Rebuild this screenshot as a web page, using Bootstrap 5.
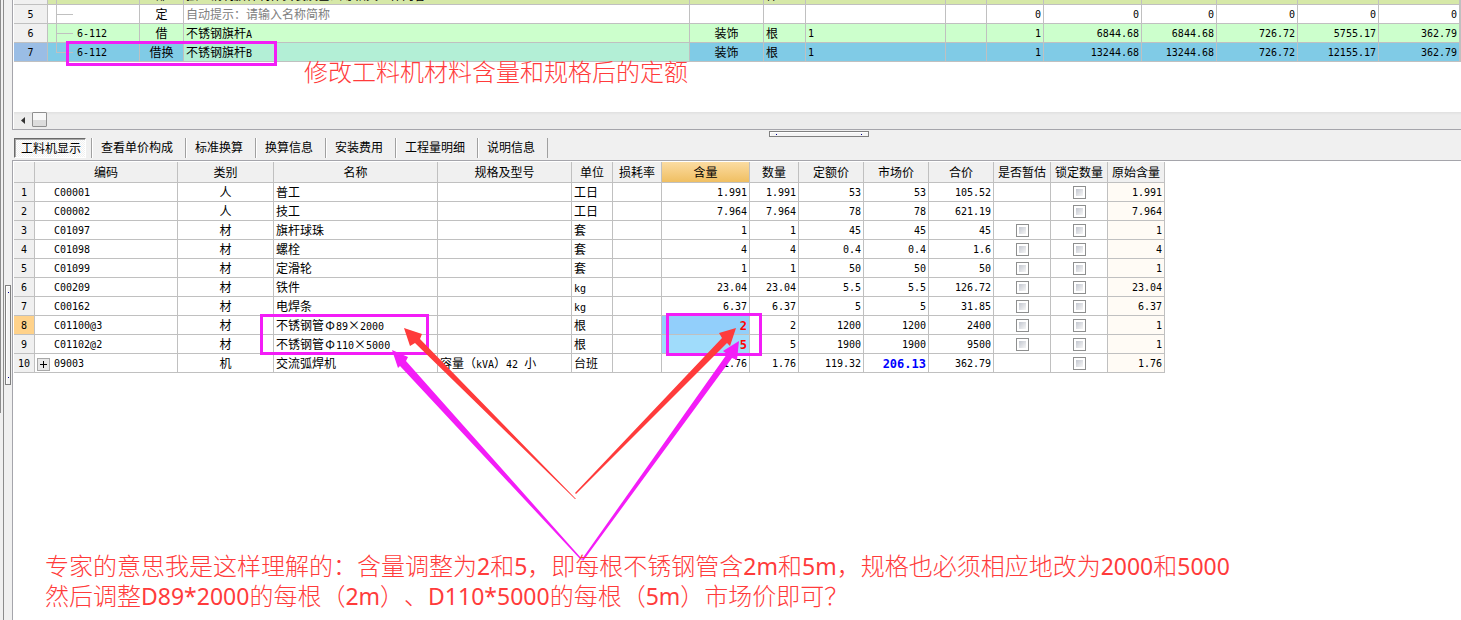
<!DOCTYPE html>
<html lang="zh-CN">
<head>
<meta charset="utf-8">
<meta name="viewport" content="width=device-width, initial-scale=1">
<title>工料机显示</title>
<link href="https://cdn.jsdelivr.net/npm/bootstrap@5.3.0/dist/css/bootstrap.min.css" rel="stylesheet">
<style>
body{background:#f0f0f0;color:#000;font:12px/18px "Liberation Sans","Noto Sans CJK SC",sans-serif}
.n{font-family:"DejaVu Sans Mono","Noto Sans CJK SC",monospace;font-size:10px}
span.n{line-height:1}
.rail{width:12px;flex:none}
.rail-edge{width:1px;height:413px;background:#8c8c8c}
.rail-bar{border-left:1px solid #8c8c8c;margin-left:2px}
.grip{background:#f4f4f4;border:1px solid #808080;box-shadow:inset 1px 1px #fff;padding:0;display:flex;justify-content:space-between;align-items:center}
.grip::before,.grip::after{content:"";width:1px;height:1px;background:#00008b}
.grip-v{width:6px;height:100px;margin:285px 0 0 1px;flex-direction:column;padding:6px 0}
.grip-h{width:100px;height:6px;padding:0 6px}
.work{min-width:0}
.pane{border-left:1px solid #a5a5ab;padding-left:1px;background:#fff}
.pane-top{height:130px;border-bottom:1px solid #a5a5ab;overflow:hidden}
.pane-bottom{border-top:1px solid #a5a5ab;padding-top:1px}
.lift{margin-top:-14px}
.grid{table-layout:fixed;border-collapse:separate;border-spacing:0;font-family:"Noto Sans CJK SC",sans-serif}
.grid-res{width:1151px}
.grid td,.grid th{height:19px;padding:0 2px;border-right:1px solid #c0c0c0;border-bottom:1px solid #c0c0c0;line-height:18px;white-space:nowrap;overflow:hidden;font-weight:400;vertical-align:top}
.grid td.n,.grid th.n{padding-top:2px;line-height:16px}
.grid thead th{height:21px;background:#f0f0f0;text-align:center;line-height:20px;padding:0}
.grid tbody th{background:#f0f0f0;text-align:center}
.grid thead .hot{background:linear-gradient(#fbdca2,#f0bf62)}
.r{text-align:right}.c{text-align:center}
.group td{background:#d6e8a8}
.green td{background:#ccffcc}
.sel td{background:#80cbe6}
.sel td.nm{background:#b3efd6}
.grid .sel th{background:#9abde5}
.grid th.cur{background:#ffd28a}
.blue1{background:#92cffb}.blue2{background:#a0dcfb}
.orig{background:#fffbf5}
.grid td.tree{position:relative;padding-left:29px}
.grid td.code{padding-left:19px}
.tree::before{content:"";position:absolute;left:8px;top:0;height:19px;border-left:1px solid #c0c0c0}
.tree::after{content:"";position:absolute;left:8px;top:9px;width:17px;border-top:1px solid #c0c0c0}
.group .tree::after{display:none}
.sel .tree::before{height:10px}
.hint{color:#808080}
.fw{display:inline-block;width:12px;text-align:center;line-height:1}
.grid td.b{font-weight:700;font-size:12px}
.text-red{color:#f00}.text-navy{color:#00f}
.hscroll{height:17px;background:linear-gradient(#e0e0e0,#ececec 3px,#ececec)}
.hscroll button{padding:0;border:0;background:none;width:18px;height:16px;display:flex;align-items:center;justify-content:center}
.hscroll .thumb{width:15px;height:15px;border:1px solid #8f8f8f;border-radius:1px;background:linear-gradient(#f8f8f8 50%,#dcdcdc 50%)}
.tabs{height:30px;padding-left:2px;position:relative}
.tabs .grip-h{position:absolute;top:1px;left:calc(50% + 32px)}
.tabrow{padding-top:8px}
.tabrow button{border:0;border-left:1px solid #a0a0a0;box-shadow:inset 1px 0 #fff;background:none;padding:0 12px 0 9px;height:20px;line-height:20px;color:#000}
.tabrow button:last-child{border-right:1px solid #a0a0a0}
.tabrow button.on{border:1px solid;border-color:#6a6a6a #fff #fff #6a6a6a;padding:0 4px 0 6px;margin-right:5px;background:repeating-conic-gradient(#fff 0 25%,#f0f0f0 0 50%) 0 0/2px 2px;box-shadow:inset 1px 1px #a8a8a8}
.tick{appearance:none;display:block;width:13px;height:13px;margin:3px auto 0;border:1px solid #8e8f8f;background:linear-gradient(135deg,#c3c7d0,#f6f6f6) content-box #f4f4f4;padding:2px}
.opener{gap:4px}
.plus{width:13px;height:13px;padding:0;border:1px solid #a8a8a8;background:#e8e8e8;flex:none;display:flex;align-items:center;justify-content:center}
.marks{position:absolute;left:0;top:0;pointer-events:none}
.note{position:absolute;margin:0;color:#ff3b3b;font:300 24px/30px "Noto Sans CJK SC",sans-serif;white-space:nowrap;font-kerning:none;text-spacing-trim:space-all}
.note span{font:400 23px/1 "Noto Sans","Noto Sans CJK SC",sans-serif}
.note-a{left:304px;top:56px}
.note-b{left:45px;top:550px}
</style>
</head>
<body>
<div class="d-flex min-vh-100 position-relative overflow-hidden">
  <aside class="rail d-flex">
    <div class="rail-edge"></div>
    <div class="rail-bar"><button class="grip grip-v" aria-label="折叠左栏"></button></div>
  </aside>
  <main class="work flex-grow-1 d-flex flex-column">
    <section class="pane pane-top d-flex flex-column">
      <table class="grid lift w-100">
        <colgroup id="topCols"></colgroup>
        <tbody id="topRows"></tbody>
      </table>
      <div class="hscroll d-flex mt-auto">
        <button aria-label="向左滚动"><svg width="4" height="7" viewBox="0 0 4 7"><path d="M4 0v7L0 3.500z" fill="#333"/></svg></button>
        <button class="thumb" aria-label="滚动条"></button>
      </div>
    </section>
    <nav class="tabs">
      <button class="grip grip-h" aria-label="折叠下栏"></button>
      <div class="tabrow d-flex">
        <button class="on">工料机显示</button><button>查看单价构成</button><button>标准换算</button><button>换算信息</button><button>安装费用</button><button>工程量明细</button><button>说明信息</button>
      </div>
    </nav>
    <section class="pane pane-bottom flex-grow-1">
      <table class="grid grid-res">
        <colgroup id="botCols"></colgroup>
        <thead><tr id="botHead"></tr></thead>
        <tbody id="botRows"></tbody>
      </table>
    </section>
  </main>
  <svg class="marks" width="1461" height="620" viewBox="0 0 1461 620">
    <g fill="none" stroke="#f31df7" stroke-width="3">
      <path d="M67.500 42.500H275.500V64.500H67.500z"/>
      <path d="M261.500 315.500H427.500V353.500H261.500z"/>
      <path d="M667.500 314.500H760.500V354.500H667.500z"/>
    </g>
    <g fill="#f31df7">
      <path d="M392 350L408 357L406 361L582 559L581 560L400 366L398 368z"/>
      <path d="M739 341L737 360L732 358L583 561L582 559L727 354L723 351z"/>
    </g>
    <g fill="#ff3b3b">
      <path d="M404 328L422 334L420 339L576 499L575 499L415 343L410 346z"/>
      <path d="M736 328L730 346L727 343L576 494L575 493L722 338L719 333z"/>
    </g>
  </svg>
  <p class="note note-a">修改工料机材料含量和规格后的定额</p>
  <p class="note note-b">专家的意思我是这样理解的：含量调整为<span>2</span>和<span>5</span>，即每根不锈钢管含<span>2m</span>和<span>5m</span>，规格也必须相应地改为<span>2000</span>和<span>5000</span><br>然后调整<span>D89*2000</span>的每根（<span>2m</span>）、<span>D110*5000</span>的每根（<span>5m</span>）市场价即可？</p>
</div>
<script src="https://cdn.jsdelivr.net/npm/bootstrap@5.3.0/dist/js/bootstrap.bundle.min.js"></script>
<script>
const el = id => document.getElementById(id);
const cols = a => a.map(w => w ? `<col style="width:${w}px">` : '<col>').join('');
// wraps Latin runs in the monospaced face, wide symbols in a full-width box
const mix = s => String(s).replace(/[Φ×]/g, m => `<i class="fw fst-normal">${m}</i>`)
  .replace(/(^|>|[^\x00-\x7f])([\w.@-]+)(?=$|<i|[^\x00-\x7f]| )/g, '$1<span class="n">$2</span>');
const num = (v, k = '') => `<td class="r n ${k}">${v}</td>`;

el('topCols').innerHTML = cols([34,92,44,0,74,42,140,41,57,98,75,81,81,81,1]);
el('topRows').innerHTML = [
  ['group',4,'','部','独立钢制旗杆制作安装及基础等相关工作内容','','件','','',['','','','','']],
  ['',5,'','定','<span class="hint">自动提示：请输入名称简称</span>','','','','0',['0','0','0','0','0']],
  ['green',6,'6-112','借','不锈钢旗杆<span class="n">A</span>','装饰','根','1','1',['6844.68','6844.68','726.72','5755.17','362.79']],
  ['sel',7,'6-112','借换','不锈钢旗杆<span class="n">B</span>','装饰','根','1','1',['13244.68','13244.68','726.72','12155.17','362.79']]
].map(([k,i,code,cat,nm,pro,unit,expr,q,v]) =>
  `<tr class="${k}"><th class="n">${i}</th><td class="tree n">${code}</td><td class="c">${cat}</td><td class="nm">${nm}</td><td class="c">${pro}</td><td>${unit}</td><td class="n">${expr}</td><td></td>${num(q)}${v.map(x => num(x)).join('')}<td class="p-0"></td></tr>`).join('');

el('botCols').innerHTML = cols([21,143,96,164,134,41,49,88,49,65,65,65,57,57,57]);
el('botHead').innerHTML = ['','编码','类别','名称','规格及型号','单位','损耗率','含量','数量','定额价','市场价','合价','是否暂估','锁定数量','原始含量']
  .map(h => `<th class="${h === '含量' ? 'hot' : ''}">${h}</th>`).join('');
el('botRows').innerHTML = [
  ['C00001','人','普工','工日','1.991','53','53','105.52','1.991'],
  ['C00002','人','技工','工日','7.964','78','78','621.19','7.964'],
  ['C01097','材','旗杆球珠','套','1','45','45','45','1'],
  ['C01098','材','螺栓','套','4','0.4','0.4','1.6','4'],
  ['C01099','材','定滑轮','套','1','50','50','50','1'],
  ['C00209','材','铁件','kg','23.04','5.5','5.5','126.72','23.04'],
  ['C00162','材','电焊条','kg','6.37','5','5','31.85','6.37'],
  ['C01100@3','材','不锈钢管Φ89×2000','根','2','1200','1200','2400','1'],
  ['C01102@2','材','不锈钢管Φ110×5000','根','5','1900','1900','9500','1'],
  ['09003','机','交流弧焊机','台班','1.76','119.32','206.13','362.79','1.76']
].map((r, i) => {
  const tick = (on, t) => `<td>${on ? `<input type="checkbox" class="tick" aria-label="${t} ${i + 1}">` : ''}</td>`;
  const code = i === 9
    ? `<td class="n"><div class="opener d-flex align-items-center"><button class="plus" aria-label="展开"><svg width="9" height="9"><path d="M1 4.500h7M4.500 1v7" stroke="#000"/></svg></button>${r[0]}</div></td>`
    : `<td class="n code">${r[0]}</td>`;
  const hot = i === 7 ? 'blue1 b text-red' : i === 8 ? 'blue2 b text-red' : '';
  return `<tr><th class="n ${i === 7 ? 'cur' : ''}">${i + 1}</th>${code}<td class="c">${r[1]}</td><td>${mix(r[2])}</td>
  <td>${i === 9 ? '容量（<span class="n">kVA</span>）<span class="n">42 </span>小' : ''}</td><td>${mix(r[3])}</td><td></td>
  ${num(r[4], hot)}${num(r[4])}${num(r[5])}${num(r[6], i === 9 ? 'b text-navy' : '')}${num(r[7])}
  ${tick(i > 1 && i < 9, '是否暂估')}${tick(true, '锁定数量')}${num(r[8], 'orig')}</tr>`;
}).join('');
</script>
</body>
</html>
